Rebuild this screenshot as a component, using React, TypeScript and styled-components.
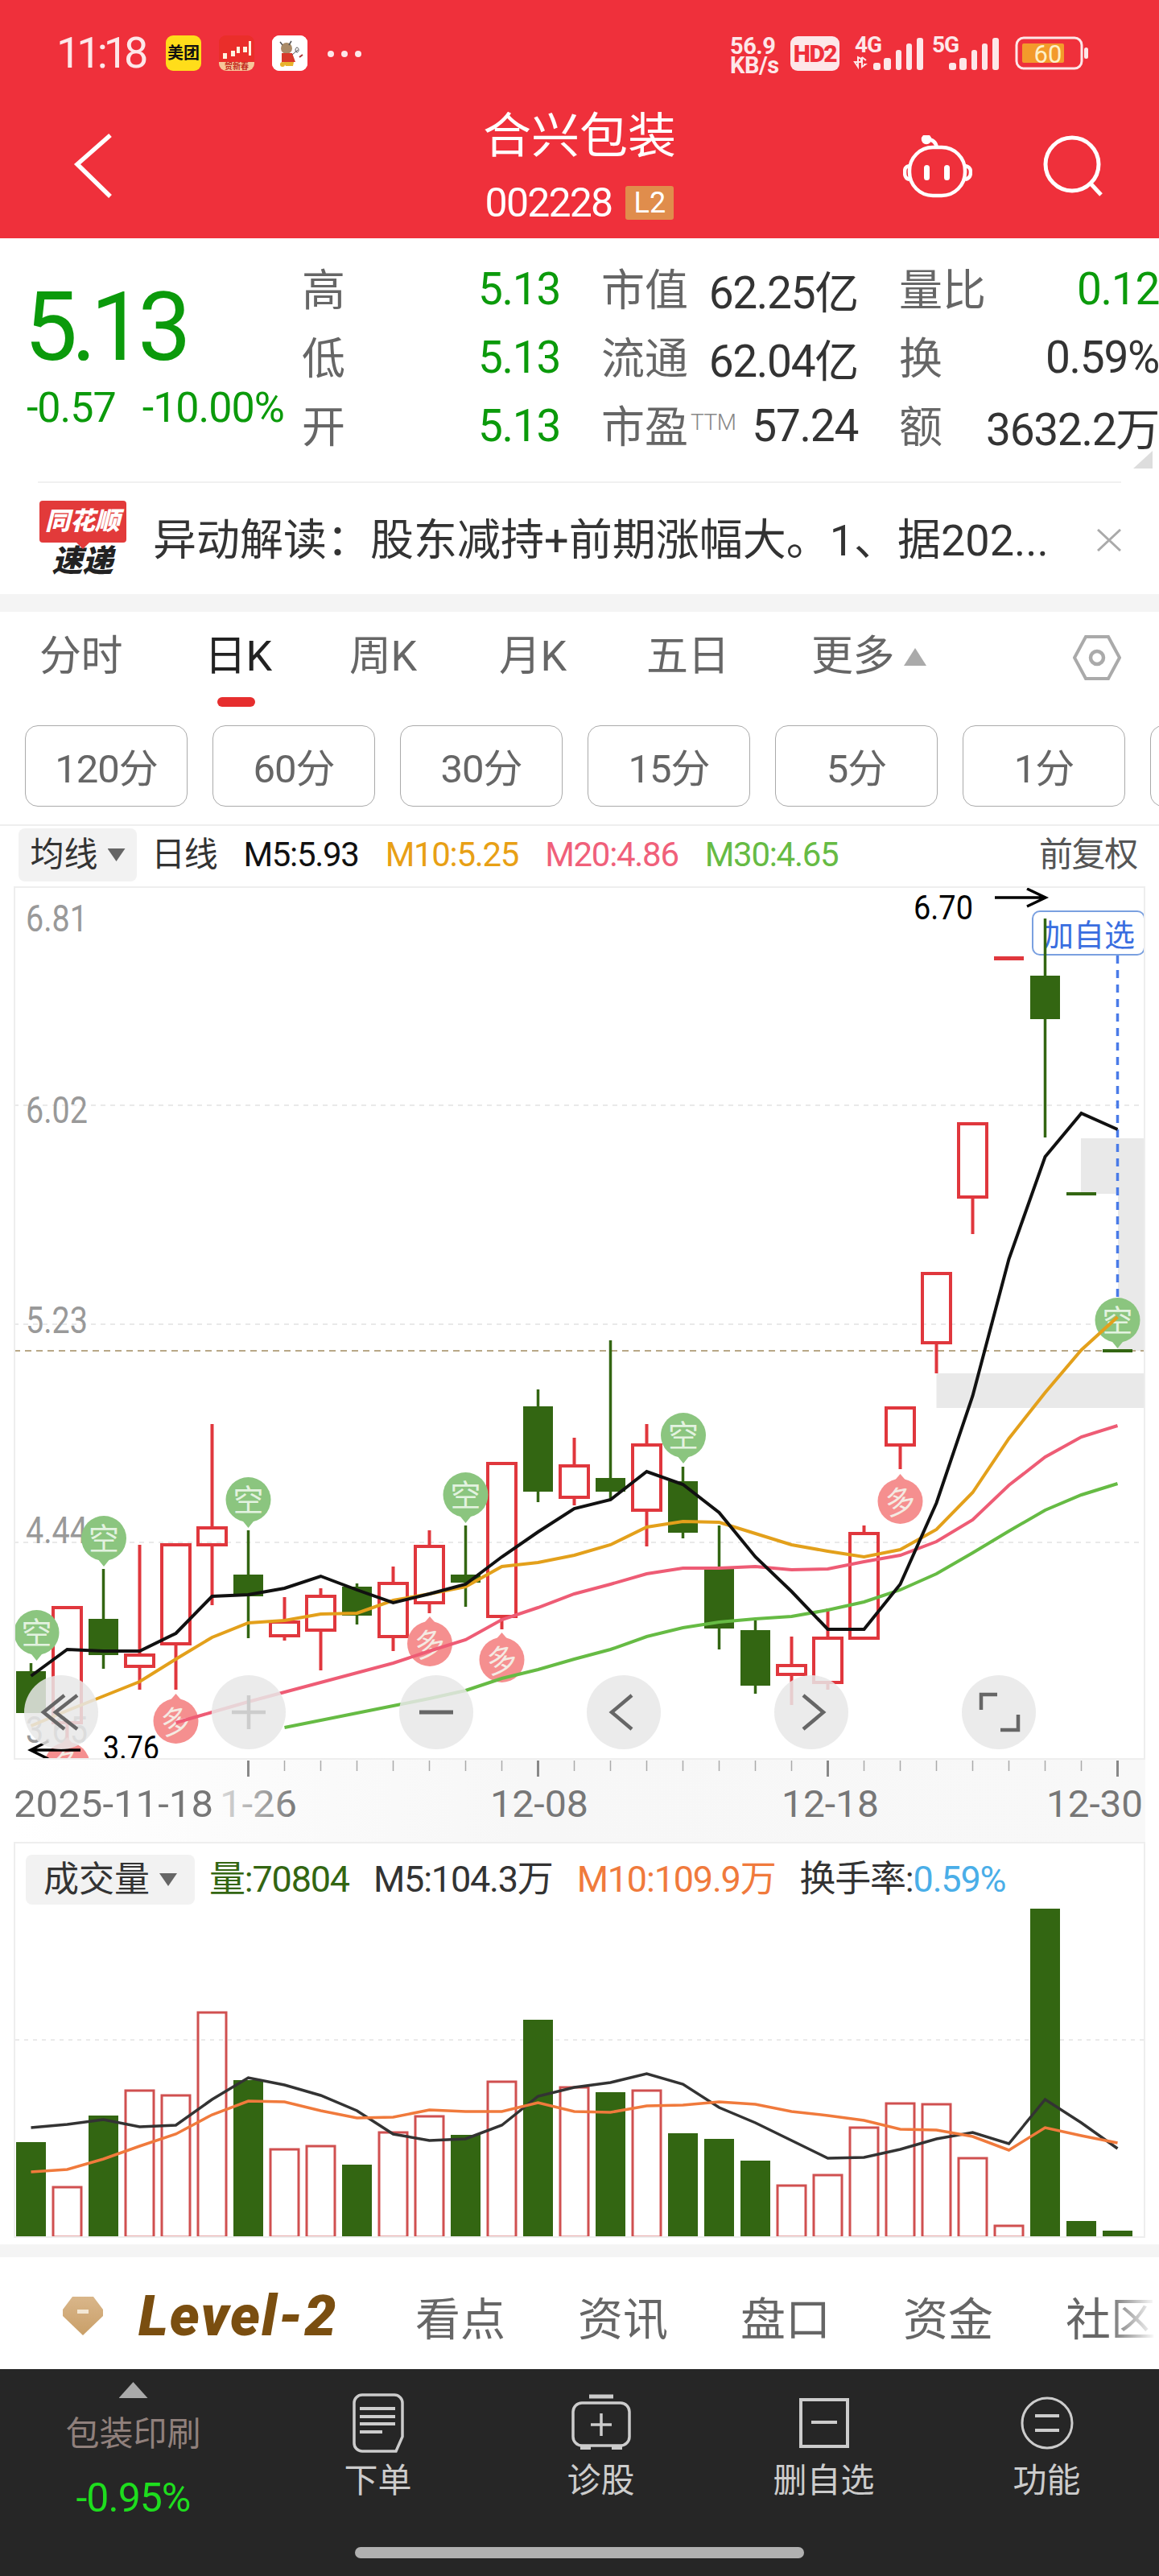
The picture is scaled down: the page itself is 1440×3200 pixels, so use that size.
import React from 'react'
import styled, { createGlobalStyle } from 'styled-components'

const GlobalStyle = createGlobalStyle`
  html, body {
    margin: 0;
    padding: 0;
    background: #fff;
    font-family: Roboto, "Noto Sans CJK SC", sans-serif;
  }
  * { box-sizing: border-box; }
`

const RED = '#e0373d'
const GREEN = '#336612'
const PRICE_GREEN = '#0b9a0b'

const Page = styled.div`
  width: 1440px;
  height: 3200px;
  overflow: hidden;
  background: #fff;
  display: flex;
  flex-direction: column;
`

/* ---------- red header ---------- */
const Header = styled.header`
  height: 296px;
  flex: none;
  background: #ef303b;
  color: #fff;
`
const StatusBar = styled.div`
  height: 130px;
  display: flex;
  align-items: flex-start;
  padding: 44px 88px 0 70px;
  color: #fde7e9;
`
const Clock = styled.div`
  font-size: 54px;
  line-height: 44px;
  letter-spacing: -5px;
  width: 136px;
`
const AppIcons = styled.div`
  display: flex;
  gap: 22px;
  align-items: center;
`
const AppIcon = styled.div<{ $bg: string }>`
  width: 44px;
  height: 44px;
  border-radius: 9px;
  overflow: hidden;
  background: ${p => p.$bg};
  display: flex;
  align-items: center;
  justify-content: center;
  color: #111;
  font-size: 20px;
  font-weight: 700;
  line-height: 1;
  white-space: nowrap;
`
const MoreDots = styled.div`
  display: flex;
  gap: 9px;
  margin: 19px 0 0 25px;
  > i {
    width: 8px;
    height: 8px;
    border-radius: 50%;
    background: #fde7e9;
  }
`
const StatusRight = styled.div`
  margin-left: auto;
  display: flex;
  align-items: flex-start;
`
const Speed = styled.div`
  width: 75px;
  font-weight: 700;
  font-size: 29px;
  line-height: 24px;
  letter-spacing: -0.5px;
  margin-top: 1px;
  white-space: nowrap;
`
const HdBadge = styled.div`
  width: 61px;
  height: 43px;
  margin: 1px 16px 0 0;
  border-radius: 9px;
  background: #fde7e9;
  color: #ef303b;
  font-size: 30px;
  font-weight: 900;
  line-height: 43px;
  text-align: center;
  letter-spacing: -1.5px;
`
const SignalSvg = styled.svg<{ $gap: number }>`
  flex: none;
  margin-right: ${p => p.$gap}px;
`
const NavRow = styled.div`
  height: 166px;
  display: grid;
  grid-template-columns: 1fr auto 1fr;
`
const BackButton = styled.div`
  padding: 34px 0 0 90px;
`
const TitleBlock = styled.div`
  display: flex;
  flex-direction: column;
  align-items: center;
`
const Title = styled.div`
  margin-top: 4px;
  font-size: 60px;
  line-height: 72px;
`
const CodeRow = styled.div`
  margin-top: 25px;
  height: 42px;
  display: flex;
  align-items: center;
  gap: 17px;
`
const Code = styled.span`
  font-size: 50px;
  line-height: 42px;
  letter-spacing: -1.8px;
`
const LevelBadge = styled.span`
  width: 60px;
  height: 42px;
  background: #e08d4c;
  border-radius: 3px;
  font-size: 36px;
  line-height: 42px;
  text-align: center;
`
const NavIcons = styled.div`
  display: flex;
  justify-content: flex-end;
  gap: 87px;
  padding: 38px 69px 0 0;
  align-items: flex-start;
`

/* ---------- quote ---------- */
const QuoteSection = styled.section`
  position: relative;
  height: 302px;
  flex: none;
  display: flex;
`
const PriceBlock = styled.div`
  width: 375px;
  padding-left: 30px;
  flex: none;
`
const BigPrice = styled.div`
  margin-top: 56px;
  font-size: 118px;
  line-height: 110px;
  letter-spacing: -7.5px;
  color: ${PRICE_GREEN};
`
const PriceChange = styled.div`
  margin-top: 20px;
  padding-left: 3px;
  display: flex;
  gap: 33px;
  font-size: 52px;
  line-height: 50px;
  letter-spacing: -1px;
  color: ${PRICE_GREEN};
`
const QuoteGrid = styled.div`
  padding-top: 20px;
  display: grid;
  grid-template-columns: 321px 319px 323px;
  grid-auto-rows: 85px;
  column-gap: 51px;
`
const Cell = styled.div`
  display: flex;
  align-items: center;
  justify-content: space-between;
  white-space: nowrap;
`
const CellLabel = styled.span`
  margin-top: -4px;
  font-size: 54px;
  color: #666;
  display: flex;
  align-items: flex-start;
`
const TtmMark = styled.span`
  font-size: 28px;
  line-height: 24px;
  margin: 26px 0 0 3px;
  font-weight: 300;
  color: #888;
  letter-spacing: -0.5px;
`
const CellValue = styled.span<{ $green?: boolean }>`
  margin-top: 1px;
  font-size: 55px;
  letter-spacing: -1.3px;
  color: ${p => (p.$green ? PRICE_GREEN : '#333')};
`
const CornerMark = styled.div`
  position: absolute;
  right: 8px;
  bottom: 16px;
  width: 24px;
  height: 22px;
  background: #ddd;
  clip-path: polygon(100% 0, 100% 100%, 0 100%);
`

/* ---------- news ---------- */
const NewsRow = styled.div`
  margin: 0 47px;
  height: 140px;
  flex: none;
  border-top: 2px solid #f0f0f0;
  display: flex;
  align-items: center;
  position: relative;
`
const LogoBlock = styled.div`
  width: 109px;
  margin-left: 1px;
  display: flex;
  flex-direction: column;
  align-items: center;
  flex: none;
  font-weight: 900;
  font-style: italic;
`
const LogoTop = styled.div`
  position: relative;
  width: 108px;
  height: 52px;
  background: #e23a3a;
  border-radius: 4px;
  color: #fff;
  font-size: 31px;
  line-height: 52px;
  text-align: center;
  white-space: nowrap;
  &::after {
    content: '';
    position: absolute;
    left: 46px;
    top: 52px;
    border: 8px solid transparent;
    border-top-color: #e23a3a;
  }
`
const LogoBottom = styled.div`
  margin-top: 3px;
  color: #222;
  font-size: 38px;
  line-height: 40px;
`
const NewsText = styled.div`
  margin: -5px 0 0 33px;
  width: 1140px;
  font-size: 54px;
  color: #333;
  white-space: nowrap;
`
const CloseMark = styled.div`
  position: absolute;
  right: 0;
  top: 57px;
`

const GrayBand = styled.div<{ $h: number; $top?: number }>`
  height: ${p => p.$h}px;
  margin-top: ${p => p.$top ?? 0}px;
  flex: none;
  background: #f4f4f4;
`

/* ---------- period tabs ---------- */
const PeriodTabs = styled.nav`
  height: 120px;
  flex: none;
  padding: 26px 47px 0 49px;
  display: grid;
  grid-template-columns: 205px 180px 186px 183px 205px auto 1fr;
  align-items: start;
`
const PeriodTab = styled.div<{ $active?: boolean }>`
  position: relative;
  font-size: 52px;
  line-height: 60px;
  letter-spacing: -0.5px;
  color: ${p => (p.$active ? '#222' : '#666')};
  display: flex;
  align-items: center;
  white-space: nowrap;
  ${p =>
    p.$active &&
    `&::after {
      content: '';
      position: absolute;
      left: 16px;
      top: 80px;
      width: 47px;
      height: 12px;
      border-radius: 6px;
      background: #e62e2e;
    }`}
`
const MoreTriangle = styled.i`
  margin-left: 12px;
  width: 28px;
  height: 22px;
  background: #aaa;
  clip-path: polygon(50% 0, 100% 100%, 0 100%);
`
const HexWrap = styled.div`
  justify-self: end;
  margin-top: 2px;
`
const ChipRow = styled.div`
  height: 146px;
  flex: none;
  padding: 21px 0 0 31px;
  display: flex;
  gap: 31px;
  overflow: hidden;
  border-bottom: 2px solid #eee;
`
const Chip = styled.div`
  width: 202px;
  height: 101px;
  flex: none;
  padding-bottom: 3px;
  border: 1px solid #aaa;
  border-radius: 16px;
  display: flex;
  align-items: center;
  justify-content: center;
  font-size: 49px;
  letter-spacing: -1px;
  color: #666;
`

/* ---------- indicator bars ---------- */
const IndicatorBar = styled.div`
  height: 75px;
  flex: none;
  padding: 3px 27px 0 23px;
  display: flex;
  align-items: flex-start;
  gap: 33px;
  font-size: 42px;
  line-height: 66px;
  letter-spacing: -1.3px;
  white-space: nowrap;
`
const SelectChip = styled.div<{ $w: number }>`
  width: ${p => p.$w}px;
  height: 66px;
  margin-right: -15px;
  flex: none;
  background: #f2f2f2;
  border-radius: 8px;
  color: #333;
  display: flex;
  align-items: center;
  justify-content: center;
  gap: 12px;
  letter-spacing: 0;
  > i {
    width: 22px;
    height: 16px;
    background: #666;
    clip-path: polygon(0 0, 100% 0, 50% 100%);
  }
`
const IndicatorText = styled.span<{ $color: string; $push?: boolean }>`
  color: ${p => p.$color};
  ${p => p.$push && 'margin-left: auto;'}
`
const PlainSpan = styled.span<{ $color: string }>`
  color: ${p => p.$color};
`

/* ---------- charts ---------- */
const ChartPanel = styled.div`
  position: relative;
  margin-left: 17px;
  width: 1406px;
  height: 1085px;
  flex: none;
  overflow: hidden;
  outline: 2px solid #eee;
  outline-offset: -2px;
`
const ChartSvg = styled.svg`
  display: block;
`
const ButtonRail = styled.div`
  position: absolute;
  left: 13px;
  bottom: 13px;
  display: flex;
  gap: 141px;
`
const RoundButton = styled.div`
  width: 92px;
  height: 92px;
  border-radius: 50%;
  background: rgba(232, 232, 232, 0.85);
`
const AxisBand = styled.div`
  margin-left: 17px;
  width: 1406px;
  height: 102px;
  flex: none;
  background: linear-gradient(to right, #fff 0, #f7f7f7 45%, #f8f8f8 100%);
`
const VolumePanel = styled.div`
  margin-left: 17px;
  width: 1406px;
  height: 492px;
  flex: none;
  border: 2px solid #eee;
  display: flex;
  flex-direction: column;
  overflow: hidden;
`
const VolumeBar = styled(IndicatorBar)`
  height: 62px;
  margin-top: 14px;
  padding: 0 0 0 13px;
  line-height: 62px;
  gap: 30px;
  font-size: 45px;
  letter-spacing: -1.2px;
  ${SelectChip} {
    margin-right: -12px;
    font-size: 44px;
    height: 62px;
  }
`

/* ---------- bottom ---------- */
const LevelTabs = styled.nav`
  height: 139px;
  flex: none;
  padding: 6px 0 0 76px;
  display: flex;
  align-items: center;
  overflow: hidden;
  white-space: nowrap;
`
const GemWrap = styled.div`
  flex: none;
  width: 54px;
  height: 48px;
`
const LevelLogo = styled.div`
  margin-left: 42px;
  width: 344px;
  font-size: 70px;
  line-height: 60px;
  font-weight: 900;
  font-style: italic;
  letter-spacing: 2px;
  color: #7a4e10;
  flex: none;
`
const LevelTab = styled.div<{ $fade?: boolean }>`
  font-size: 56px;
  margin-right: 90px;
  color: #666;
  flex: none;
  ${p => p.$fade && 'mask-image: linear-gradient(to right, #000 45%, transparent 100%);'}
`
const DarkBar = styled.footer`
  flex: 1;
  background: #262626;
  display: flex;
  flex-direction: column;
`
const DarkMain = styled.div`
  height: 221px;
  flex: none;
  display: flex;
`
const SectorBlock = styled.div`
  width: 331px;
  flex: none;
  padding-top: 16px;
  display: flex;
  flex-direction: column;
  align-items: center;
`
const SectorArrow = styled.i`
  width: 36px;
  height: 20px;
  background: #aaa;
  clip-path: polygon(50% 0, 100% 100%, 0 100%);
`
const SectorName = styled.div`
  margin-top: 20px;
  font-size: 42px;
  line-height: 50px;
  color: #90807c;
`
const SectorChange = styled.div`
  margin-top: 29px;
  font-size: 50px;
  line-height: 50px;
  letter-spacing: -1px;
  color: #1edd1e;
`
const ActionItem = styled.div`
  width: 277px;
  flex: none;
  padding-top: 29px;
  display: flex;
  flex-direction: column;
  align-items: center;
  color: #ccc;
`
const ActionIcon = styled.div`
  height: 76px;
  display: flex;
  align-items: center;
  justify-content: center;
`
const ActionLabel = styled.div`
  margin-top: 9px;
  font-size: 42px;
  line-height: 50px;
`
const HomeBar = styled.div`
  width: 558px;
  height: 14px;
  flex: none;
  margin: 0 auto;
  border-radius: 7px;
  background: #b0b0b0;
`

/* ---------- data ---------- */
type Candle = [0 | 1, number, number, number, number]
const xAt = (i: number) => 38.5 + 45 * i

// [isRed, wickTop, bodyTop, bodyBottom, wickBottom]
const candles: Candle[] = [
  [0, 2066, 2076, 2128, 2128],
  [1, 1997, 1997, 2140, 2165],
  [0, 1949, 2011, 2056, 2073],
  [1, 1919, 2056, 2070, 2099],
  [1, 1919, 1919, 2042, 2099],
  [1, 1769, 1898, 1919, 1994],
  [0, 1901, 1956, 1983, 2035],
  [1, 1984, 2015, 2032, 2038],
  [1, 1973, 1983, 2025, 2075],
  [0, 1967, 1971, 2007, 2018],
  [1, 1946, 1967, 2033, 2051],
  [1, 1901, 1921, 1991, 2004],
  [0, 1895, 1956, 1966, 1996],
  [1, 1818, 1818, 2008, 2024],
  [0, 1726, 1747, 1853, 1866],
  [1, 1786, 1821, 1860, 1870],
  [0, 1665, 1836, 1853, 1863],
  [1, 1769, 1795, 1876, 1921],
  [0, 1822, 1840, 1904, 1911],
  [0, 1895, 1948, 2023, 2049],
  [0, 2013, 2025, 2094, 2104],
  [1, 2033, 2069, 2080, 2118],
  [1, 1998, 2035, 2090, 2099],
  [1, 1895, 1905, 2035, 2035],
  [1, 1749, 1749, 1795, 1825],
  [1, 1582, 1582, 1668, 1706],
  [1, 1396, 1396, 1487, 1533],
  [1, 1188, 1188, 1193, 1193],
  [0, 1141, 1212, 1266, 1413],
  [0, 1481, 1481, 1485, 1485],
  [0, 1676, 1676, 1680, 1680],
]

const m5 = [2082, 2049, 2051, 2051, 2029, 1983, 1981, 1973, 1958, 1975, 1991, 1980, 1968, 1934, 1903, 1874, 1863, 1828, 1844, 1879, 1934, 1977, 2024, 2024, 1968, 1867, 1734, 1564, 1437, 1383, 1403]
const m10 = [2144, 2125, 2107, 2089, 2061, 2034, 2016, 2013, 2005, 2004, 1988, 1980, 1971, 1946, 1941, 1932, 1919, 1897, 1890, 1891, 1905, 1919, 1927, 1934, 1925, 1900, 1854, 1787, 1730, 1677, 1636]
const m20 = [2140, 2127, 2114, 2102, 2090, 2078, 2066, 2051, 2037, 2012, 1997, 1980, 1968, 1955, 1948, 1948, 1946, 1950, 1949, 1940, 1932, 1915, 1888, 1845, 1810, 1785, 1771]
const m30 = [2146, 2137, 2128, 2119, 2110, 2100, 2085, 2074, 2061, 2049, 2033, 2022, 2015, 2011, 2008, 2000, 1990, 1975, 1955, 1929, 1902, 1876, 1857, 1843]

const volumes = [2661, 2717, 2628, 2597, 2603, 2500, 2584, 2670, 2666, 2689, 2649, 2629, 2652, 2586, 2509, 2593, 2599, 2597, 2650, 2657, 2684, 2715, 2702, 2643, 2613, 2614, 2681, 2765, 2371, 2759, 2771]
const volM5 = [2643, 2639, 2633, 2642, 2640, 2608, 2581, 2590, 2603, 2622, 2651, 2659, 2657, 2640, 2604, 2593, 2587, 2576, 2589, 2618, 2637, 2659, 2681, 2680, 2670, 2657, 2649, 2663, 2608, 2637, 2669]
const volM10 = [2698, 2695, 2682, 2666, 2651, 2627, 2610, 2611, 2622, 2631, 2630, 2621, 2623, 2623, 2612, 2623, 2624, 2616, 2615, 2611, 2614, 2623, 2628, 2634, 2645, 2646, 2654, 2671, 2643, 2653, 2662]

const shortPins: [number, number][] = [[45.5, 2028], [129, 1911], [308.5, 1863], [578.5, 1857], [849, 1783], [1388.5, 1640]]
const longPins: [number, number][] = [[83.5, 2192], [218.5, 2138], [534, 2042], [623.5, 2062], [1118.5, 1865]]

const priceLabels: [string, number][] = [['6.81', 1157], ['6.02', 1395], ['5.23', 1656], ['4.44', 1917], ['3.65', 2165]]

const toPoints = (values: number[], start = 0) =>
  values.map((y, i) => `${xAt(i + start)},${y}`).join(' ')

/* ---------- drawings ---------- */
const CandleMark = ({ c, i }: { c: Candle; i: number }) => {
  const [isRed, top, bodyTop, bodyBottom, bottom] = c
  const x = xAt(i)
  const color = isRed ? RED : GREEN
  const thin = bodyBottom - bodyTop < 8
  return (
    <g>
      {top < bodyTop && <line x1={x} x2={x} y1={top} y2={bodyTop} stroke={color} strokeWidth={isRed ? 4 : 3.5} />}
      {bottom > bodyBottom && <line x1={x} x2={x} y1={bodyBottom} y2={bottom} stroke={color} strokeWidth={isRed ? 4 : 3.5} />}
      {isRed && !thin ? (
        <rect x={x - 17.5} y={bodyTop} width={35} height={bodyBottom - bodyTop} fill="#fff" fillOpacity={0.01} stroke={color} strokeWidth={4} />
      ) : (
        <rect x={x - 18.5} y={bodyTop} width={37} height={bodyBottom - bodyTop} fill={color} />
      )}
    </g>
  )
}

const Pin = ({ x, y, long }: { x: number; y: number; long?: boolean }) => {
  const fill = long ? '#f58f8f' : '#8bc57f'
  const tip = long ? y - 34 : y + 35
  const base = long ? y - 20 : y + 20
  return (
    <g>
      <circle cx={x} cy={y} r={28} fill={fill} />
      <polygon points={`${x - 12},${base} ${x + 12},${base} ${x},${tip}`} fill={fill} />
      <text x={x} y={y + 14} fontSize={38} textAnchor="middle" fill="#f4fbf2" fillOpacity={0.85} transform={long ? `rotate(-12 ${x} ${y})` : undefined}>
        {long ? '多' : '空'}
      </text>
    </g>
  )
}

const Robot = () => (
  <svg width="86" height="78" viewBox="0 0 86 78" fill="none" stroke="#fff" strokeWidth="4.5">
    <rect x="8" y="15" width="69" height="60" rx="29" />
    <path d="M8 38c-5 1-6 3-6 8s1 8 6 9M77 38c5 1 7 3 7 8s-2 8-7 9" />
    <path d="M29 5c6 0 12 2 13 11" />
    <circle cx="29" cy="5" r="4" fill="#fff" />
    <rect x="27" y="38" width="5" height="17" rx="2.5" fill="#fff" strokeWidth="2" />
    <rect x="52" y="38" width="5" height="17" rx="2.5" fill="#fff" strokeWidth="2" />
  </svg>
)

const Signal = ({ label, arrows, gap }: { label: string; arrows?: boolean; gap: number }) => (
  <SignalSvg $gap={gap} width="92" height="46" viewBox="0 0 92 46" fill="#fde7e9">
    <text x={arrows ? 3 : 5} y={21} fontSize="28" fontWeight="700" letterSpacing="-1">{label}</text>
    {arrows && <path d="M3 33h8v-4l-4-2v12zM12 27v12l4-3h-2M12 27l5 4" stroke="#fde7e9" strokeWidth="2" fill="none" />}
    {[[26, 34, 9], [39, 28, 9], [54, 18, 7], [67, 10, 7], [80, 3, 8]].map(([x, y, w]) => (
      <rect key={x} x={x} y={y} width={w} height={43 - y} rx="3" />
    ))}
  </SignalSvg>
)

const Battery = () => (
  <svg width="91" height="44" viewBox="0 0 91 44">
    <rect x="2" y="3" width="81" height="38" rx="9" fill="none" stroke="#fde7e9" strokeWidth="3" />
    <rect x="9" y="10" width="52" height="24" rx="2" fill="#f39a2b" />
    <text x="41" y="34" fontSize="31" textAnchor="middle" fill="#fdf0c8">60</text>
    <rect x="86" y="15" width="5" height="14" rx="2.5" fill="#fde7e9" />
  </svg>
)

const StockAppIcon = () => (
  <svg width="44" height="44" viewBox="0 0 44 44">
    <rect width="44" height="44" fill="#ea2e2a" />
    <path d="M0 33h44v11H0z" fill="#f7c79a" />
    <path d="M5 22h5v7H5zM15 19h5v7h-5zM22 22h4v-8h-4zM30 14h5v7h-5zM37 7h3v18h-3z" fill="#fff4e0" />
    <text x="22" y="42" fontSize="10" textAnchor="middle" fill="#c22a1e">贺新春</text>
  </svg>
)

const OxAppIcon = () => (
  <svg width="44" height="44" viewBox="0 0 44 44">
    <rect width="44" height="44" fill="#fff" />
    <ellipse cx="18" cy="16" rx="7" ry="7" fill="#a98b68" />
    <path d="M10 8l3 4M24 7l-3 5" stroke="#555" strokeWidth="1.5" />
    <path d="M12 22h13l4 11H12z" fill="#d8392a" />
    <path d="M25 24l7-6M31 15a2 3 0 1 0 .1 0" stroke="#555" strokeWidth="1" fill="#fff" />
    <path d="M14 33h13l-1 5h-9z" fill="#e8b32c" />
    <path d="M34 27l4-3" stroke="#a33" strokeWidth="2" />
    <circle cx="13" cy="36" r="3" fill="#e8b32c" />
  </svg>
)

const GemIcon = () => (
  <GemWrap>
    <svg width="54" height="48" viewBox="0 0 54 48">
      <defs>
        <linearGradient id="gem" x1="0" x2="0" y1="0" y2="1">
          <stop offset="0" stopColor="#d9b68a" />
          <stop offset="1" stopColor="#c99f68" />
        </linearGradient>
      </defs>
      <path d="M14 0h26l12 16v8L27 48 2 24v-8z" fill="url(#gem)" />
      <rect x="20" y="16" width="14" height="5" fill="#f3e7d4" />
    </svg>
  </GemWrap>
)

const Candles = () => (
  <ChartSvg width="1406" height="1085" viewBox="17 1101 1406 1085">
    <g fill="#e9e9e9">
      <rect x="1343" y="1414" width="80" height="69" />
      <rect x="1389" y="1483" width="34" height="195" />
      <rect x="1163.5" y="1706" width="260" height="43" />
    </g>
    {[1373, 1645, 1916].map(y => (
      <line key={y} x1="17" x2="1423" y1={y} y2={y} stroke="#e2e2e2" strokeWidth="1.5" strokeDasharray="6 6" />
    ))}
    <line x1="17" x2="1423" y1="1678" y2="1678" stroke="#b8a888" strokeWidth="2" strokeDasharray="8 6" />
    {priceLabels.map(([t, y]) => (
      <text key={t} x="32" y={y} fontSize="46" fill="#999" textLength={77} lengthAdjust="spacingAndGlyphs">{t}</text>
    ))}
    <line x1="1388.5" x2="1388.5" y1="1187" y2="1670" stroke="#4a7be8" strokeWidth="3.5" strokeDasharray="10 8" />
    <rect x="1283" y="1132" width="139" height="54" rx="9" fill="#fff" stroke="#7aa0e0" strokeWidth="2" />
    <text x="1296" y="1175" fontSize="38" fill="#3a6ee0">加自选</text>
    {candles.map((c, i) => <CandleMark key={i} c={c} i={i} />)}
    {shortPins.map(([x, y]) => <Pin key={x} x={x} y={y} />)}
    {longPins.map(([x, y]) => <Pin key={x} x={x} y={y} long />)}
    <g fill="none" strokeWidth="4">
      <polyline points={toPoints(m30, 7)} stroke="#66bb44" />
      <polyline points={toPoints(m20, 4)} stroke="#ee5c75" />
      <polyline points={toPoints(m10)} stroke="#e3a01b" />
      <polyline points={toPoints(m5)} stroke="#111" />
    </g>
    <text x="1135" y="1142" fontSize="42" fill="#000" textLength={74} lengthAdjust="spacingAndGlyphs">6.70</text>
    <path d="M1236 1115h62M1276 1104l23 11-23 11" fill="none" stroke="#000" strokeWidth="3.5" />
    <text x="128" y="2185" fontSize="40" fill="#000" textLength={70} lengthAdjust="spacingAndGlyphs">3.76</text>
    <path d="M100 2174H39M60 2163l-22 11 22 11" fill="none" stroke="#000" strokeWidth="3.5" />
  </ChartSvg>
)

const TimeAxis = () => (
  <ChartSvg width="1406" height="102" viewBox="17 2186 1406 102">
    <defs>
      <linearGradient id="fadeDate" x1="270" x2="370" y1="0" y2="0" gradientUnits="userSpaceOnUse">
        <stop offset="0" stopColor="#ddd" />
        <stop offset="1" stopColor="#777" />
      </linearGradient>
    </defs>
    {candles.map((_, i) => {
      if (i < 6) return null
      const major = (i - 6) % 8 === 0
      return (
        <line
          key={i}
          x1={xAt(i)}
          x2={xAt(i)}
          y1="2187"
          y2={major ? 2207 : 2200}
          stroke={major ? '#888' : '#aaa'}
          strokeWidth={major ? 3 : 1.5}
        />
      )
    })}
    <g fontSize="47" fill="#777">
      <text x="17" y="2257" textLength={248} lengthAdjust="spacingAndGlyphs">2025-11-18</text>
      <text x="273" y="2257" fill="url(#fadeDate)" textLength={96} lengthAdjust="spacingAndGlyphs">1-26</text>
      <text x="609" y="2257" textLength={122} lengthAdjust="spacingAndGlyphs">12-08</text>
      <text x="971" y="2257" textLength={121} lengthAdjust="spacingAndGlyphs">12-18</text>
      <text x="1300" y="2257" textLength={120} lengthAdjust="spacingAndGlyphs">12-30</text>
    </g>
  </ChartSvg>
)

const VolumeChart = () => (
  <ChartSvg width="1402" height="412" viewBox="19 2366 1402 412">
    <line x1="19" x2="1421" y1="2534" y2="2534" stroke="#e4e4e4" strokeWidth="1.5" strokeDasharray="5 6" />
    {volumes.map((top, i) =>
      candles[i][0] ? (
        <rect key={i} x={xAt(i) - 17.5} y={top} width={35} height={2779 - top} fill="#fff" fillOpacity={0.01} stroke="#d05050" strokeWidth="3" />
      ) : (
        <rect key={i} x={xAt(i) - 18.5} y={top} width={37} height={2780 - top} fill={GREEN} />
      )
    )}
    <polyline points={toPoints(volM5)} fill="none" stroke="#333" strokeWidth="3.5" />
    <polyline points={toPoints(volM10)} fill="none" stroke="#f07a3c" strokeWidth="3.5" />
  </ChartSvg>
)

const btnStroke = { fill: 'none', strokeWidth: 4.5 }
const buttonIcons = [
  <path key="a" d="M50 25L24 46l26 21M66 25L39 46l27 21" stroke="#666" {...btnStroke} />,
  <path key="b" d="M25 46h42M46 25v42" stroke="#ccc" {...btnStroke} />,
  <path key="c" d="M25 46h42" stroke="#666" {...btnStroke} strokeWidth={5} />,
  <path key="d" d="M56 25L31 46l25 21" stroke="#666" {...btnStroke} />,
  <path key="e" d="M36 25l25 21-25 21" stroke="#666" {...btnStroke} />,
  <path key="f" d="M24 43V24h20M70 49v19H48" stroke="#666" {...btnStroke} />,
]

const chipLabels = ['120分', '60分', '30分', '15分', '5分', '1分', '']

export default function App() {
  return (
    <Page>
      <GlobalStyle />
      <Header>
        <StatusBar>
          <Clock>11:18</Clock>
          <AppIcons>
            <AppIcon $bg="#ffdd1a">美团</AppIcon>
            <AppIcon $bg="#ea2e2a"><StockAppIcon /></AppIcon>
            <AppIcon $bg="#fff"><OxAppIcon /></AppIcon>
          </AppIcons>
          <MoreDots><i /><i /><i /></MoreDots>
          <StatusRight>
            <Speed>56.9<br />KB/s</Speed>
            <HdBadge>HD2</HdBadge>
            <Signal label="4G" arrows gap={2} />
            <Signal label="5G" gap={16} />
            <Battery />
          </StatusRight>
        </StatusBar>
        <NavRow>
          <BackButton>
            <svg width="50" height="84" viewBox="0 0 50 84" fill="none" stroke="#fff" strokeWidth="5.5">
              <path d="M47 4L6 40l41 40" />
            </svg>
          </BackButton>
          <TitleBlock>
            <Title>合兴包装</Title>
            <CodeRow>
              <Code>002228</Code>
              <LevelBadge>L2</LevelBadge>
            </CodeRow>
          </TitleBlock>
          <NavIcons>
            <Robot />
            <svg width="76" height="76" viewBox="0 0 76 76" fill="none" stroke="#fff" strokeWidth="5">
              <circle cx="37" cy="36" r="33" />
              <path d="M60 60l13 14" />
            </svg>
          </NavIcons>
        </NavRow>
      </Header>

      <QuoteSection>
        <PriceBlock>
          <BigPrice>5.13</BigPrice>
          <PriceChange><span>-0.57</span><span>-10.00%</span></PriceChange>
        </PriceBlock>
        <QuoteGrid>
          <Cell><CellLabel>高</CellLabel><CellValue $green>5.13</CellValue></Cell>
          <Cell><CellLabel>市值</CellLabel><CellValue>62.25亿</CellValue></Cell>
          <Cell><CellLabel>量比</CellLabel><CellValue $green>0.12</CellValue></Cell>
          <Cell><CellLabel>低</CellLabel><CellValue $green>5.13</CellValue></Cell>
          <Cell><CellLabel>流通</CellLabel><CellValue>62.04亿</CellValue></Cell>
          <Cell><CellLabel>换</CellLabel><CellValue>0.59%</CellValue></Cell>
          <Cell><CellLabel>开</CellLabel><CellValue $green>5.13</CellValue></Cell>
          <Cell><CellLabel>市盈<TtmMark>TTM</TtmMark></CellLabel><CellValue>57.24</CellValue></Cell>
          <Cell><CellLabel>额</CellLabel><CellValue>3632.2万</CellValue></Cell>
        </QuoteGrid>
        <CornerMark />
      </QuoteSection>

      <NewsRow>
        <LogoBlock>
          <LogoTop>同花顺</LogoTop>
          <LogoBottom>速递</LogoBottom>
        </LogoBlock>
        <NewsText>异动解读：股东减持+前期涨幅大。1、据202...</NewsText>
        <CloseMark>
          <svg width="30" height="28" viewBox="0 0 30 28" stroke="#aaa" strokeWidth="3">
            <path d="M1 1l28 26M29 1L1 27" />
          </svg>
        </CloseMark>
      </NewsRow>
      <GrayBand $h={22} />

      <PeriodTabs>
        <PeriodTab>分时</PeriodTab>
        <PeriodTab $active>日K</PeriodTab>
        <PeriodTab>周K</PeriodTab>
        <PeriodTab>月K</PeriodTab>
        <PeriodTab>五日</PeriodTab>
        <PeriodTab>更多<MoreTriangle /></PeriodTab>
        <HexWrap>
          <svg width="60" height="58" viewBox="0 0 60 58" fill="none" stroke="#aaa" strokeWidth="4">
            <path d="M16 3h28l14 26-14 26H16L2 29z" />
            <circle cx="30" cy="29" r="8" strokeWidth="4.5" />
          </svg>
        </HexWrap>
      </PeriodTabs>
      <ChipRow>
        {chipLabels.map((label, i) => <Chip key={i}>{label}</Chip>)}
      </ChipRow>

      <IndicatorBar>
        <SelectChip $w={147}>均线<i /></SelectChip>
        <IndicatorText $color="#333">日线</IndicatorText>
        <IndicatorText $color="#111">M5:5.93</IndicatorText>
        <IndicatorText $color="#e8a015">M10:5.25</IndicatorText>
        <IndicatorText $color="#f0607a">M20:4.86</IndicatorText>
        <IndicatorText $color="#66bb44">M30:4.65</IndicatorText>
        <IndicatorText $color="#555" $push>前复权</IndicatorText>
      </IndicatorBar>

      <ChartPanel>
        <Candles />
        <ButtonRail>
          {buttonIcons.map((icon, i) => (
            <RoundButton key={i}>
              <svg width="92" height="92" viewBox="0 0 92 92">{icon}</svg>
            </RoundButton>
          ))}
        </ButtonRail>
      </ChartPanel>
      <AxisBand><TimeAxis /></AxisBand>

      <VolumePanel>
        <VolumeBar>
          <SelectChip $w={210}>成交量<i /></SelectChip>
          <IndicatorText $color={GREEN}>量:70804</IndicatorText>
          <IndicatorText $color="#333">M5:104.3万</IndicatorText>
          <IndicatorText $color="#f07a3c">M10:109.9万</IndicatorText>
          <span>
            <PlainSpan $color="#333">换手率:</PlainSpan>
            <PlainSpan $color="#4aaee8">0.59%</PlainSpan>
          </span>
        </VolumeBar>
        <VolumeChart />
      </VolumePanel>
      <GrayBand $h={16} $top={8} />

      <LevelTabs>
        <GemIcon />
        <LevelLogo>Level-2</LevelLogo>
        <LevelTab>看点</LevelTab>
        <LevelTab>资讯</LevelTab>
        <LevelTab>盘口</LevelTab>
        <LevelTab>资金</LevelTab>
        <LevelTab $fade>社区</LevelTab>
      </LevelTabs>

      <DarkBar>
        <DarkMain>
          <SectorBlock>
            <SectorArrow />
            <SectorName>包装印刷</SectorName>
            <SectorChange>-0.95%</SectorChange>
          </SectorBlock>
          <ActionItem>
            <ActionIcon>
              <svg width="64" height="74" viewBox="0 0 64 74" fill="none" stroke="#ccc" strokeWidth="3.5">
                <path d="M12 2h40a10 10 0 0 1 10 10v42l-8 18H12A10 10 0 0 1 2 62V12A10 10 0 0 1 12 2z" />
                <path d="M9 19h44M9 29h44M9 38h44M9 48h28" strokeWidth="4" />
              </svg>
            </ActionIcon>
            <ActionLabel>下单</ActionLabel>
          </ActionItem>
          <ActionItem>
            <ActionIcon>
              <svg width="74" height="72" viewBox="0 0 74 72" fill="none" stroke="#ccc" strokeWidth="3.5">
                <path d="M22 3h30" strokeWidth="5" />
                <rect x="2" y="11" width="70" height="53" rx="11" />
                <path d="M37 24v28M24 38h26" />
                <path d="M11 66h13M50 66h13" strokeWidth="6" />
              </svg>
            </ActionIcon>
            <ActionLabel>诊股</ActionLabel>
          </ActionItem>
          <ActionItem>
            <ActionIcon>
              <svg width="62" height="62" viewBox="0 0 62 62" fill="none" stroke="#ccc" strokeWidth="4">
                <rect x="2" y="2" width="58" height="58" />
                <path d="M15 30h32" />
              </svg>
            </ActionIcon>
            <ActionLabel>删自选</ActionLabel>
          </ActionItem>
          <ActionItem>
            <ActionIcon>
              <svg width="66" height="66" viewBox="0 0 66 66" fill="none" stroke="#ccc" strokeWidth="3">
                <circle cx="33" cy="33" r="31" />
                <path d="M18 24h30M18 42h30" strokeWidth="4" />
              </svg>
            </ActionIcon>
            <ActionLabel>功能</ActionLabel>
          </ActionItem>
        </DarkMain>
        <HomeBar />
      </DarkBar>
    </Page>
  )
}
